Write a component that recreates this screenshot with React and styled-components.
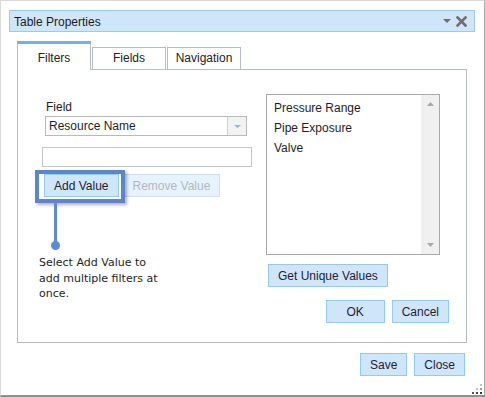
import React from "react";
import styled, { createGlobalStyle } from "styled-components";

const Global = createGlobalStyle`
  html, body { margin: 0; padding: 0; background: #fff; }
  * { box-sizing: border-box; }
`;

const Frame = styled.div`
  position: relative;
  width: 485px;
  height: 397px;
  padding: 9px 9px 0 8px;
  border-left: 1px solid #dadada;
  border-top: 1px solid #dadada;
  border-right: 1px solid #a9a9a9;
  border-bottom: 2px solid #8f8f8f;
  background: #fff;
  font-family: "Liberation Sans", Arial, sans-serif;
  font-size: 12px;
  color: #1e1e1e;
`;

const TitleBar = styled.div`
  height: 22px;
  border: 1px solid #9ccaee;
  background: #cfe6fa;
  display: flex;
  align-items: center;
  padding: 0 7px 0 4px;
`;

const TitleText = styled.div`
  flex: 1;
  line-height: 14px;
  padding-top: 1px;
  color: #1a1a1a;
`;

const TitleIcons = styled.div`
  display: flex;
  align-items: center;
  gap: 5px;
`;

const TabStrip = styled.div`
  display: flex;
  align-items: flex-end;
  gap: 1px;
  margin: 9px 0 -1px 8px;
  position: relative;
  z-index: 1;
`;

const Tab = styled.div`
  width: 74px;
  height: ${(p) => (p.$active ? "29px" : "23px")};
  display: flex;
  align-items: flex-end;
  justify-content: center;
  line-height: 14px;
  background: #fff;
  color: #222;
  border-left: 1px solid #b9bdc7;
  border-right: 1px solid #b9bdc7;
  border-top: ${(p) => (p.$active ? "3px solid #74b1e6" : "1px solid #b9bdc7")};
  border-bottom: ${(p) => (p.$active ? "none" : "1px solid #b9bdc7")};
  padding-bottom: ${(p) => (p.$active ? "5px" : "4px")};
`;

const Panel = styled.div`
  margin: 0 8px;
  height: 274px;
  border: 1px solid #b7bbc6;
  display: grid;
  grid-template-columns: 248px 1fr;
`;

const LeftCol = styled.div`
  padding: 30px 0 0 24px;
  display: flex;
  flex-direction: column;
  align-items: flex-start;
`;

const FieldLabel = styled.div`
  margin-left: 4px;
  line-height: 14px;
  color: #222;
`;

const Select = styled.div`
  margin: 2px 0 0 3px;
  width: 202px;
  height: 20px;
  border: 1px solid #b9b9b9;
  display: flex;
  align-items: stretch;
`;

const SelectValue = styled.div`
  flex: 1;
  padding-left: 3px;
  line-height: 18px;
  color: #1e1e1e;
`;

const SelectArrow = styled.div`
  width: 19px;
  border-left: 1px solid #cfcfcf;
  background: #f2f2f2;
  display: flex;
  align-items: center;
  justify-content: center;
`;

const TextInput = styled.div`
  margin-top: 11px;
  width: 210px;
  height: 20px;
  border: 1px solid #c6c6c6;
  background: #fff;
`;

const ButtonRow = styled.div`
  position: relative;
  margin: 7px 0 0 2px;
  display: flex;
  gap: 4px;
`;

const Button = styled.div`
  height: 23px;
  min-width: ${(p) => p.$minWidth || 0}px;
  padding: 0 9px;
  border: 1px solid ${(p) => (p.$disabled ? "#cbe3f8" : "#94c9f1")};
  background: ${(p) => (p.$disabled ? "#e6f2fd" : "#cfe6fa")};
  color: ${(p) => (p.$disabled ? "#b3b8c0" : "#1f2230")};
  display: flex;
  align-items: center;
  justify-content: center;
  line-height: 14px;
  white-space: nowrap;
`;

const Highlight = styled.div`
  position: absolute;
  left: -9px;
  top: -4px;
  width: 90px;
  height: 33px;
  border: 4px solid #5b86cb;
  box-shadow: 2px 2px 3px rgba(0, 0, 0, 0.3);
  pointer-events: none;
`;

const Connector = styled.div`
  position: absolute;
  left: 10px;
  top: 29px;
  width: 3px;
  height: 40px;
  background: #5b8bd3;
`;

const Dot = styled.div`
  position: absolute;
  left: 7px;
  top: 67px;
  width: 9px;
  height: 9px;
  border-radius: 50%;
  background: #5b8bd3;
`;

const HelpText = styled.div`
  margin: 58px 0 0 -3px;
  width: 130px;
  font-family: "DejaVu Sans", Verdana, sans-serif;
  font-size: 11px;
  line-height: 15.5px;
  color: #1e1e1e;
`;

const RightCol = styled.div`
  padding-top: 24px;
  display: flex;
  flex-direction: column;
  align-items: flex-start;
`;

const ListBox = styled.div`
  width: 174px;
  height: 161px;
  border: 1px solid #a9a9a9;
  display: flex;
`;

const ListItems = styled.div`
  flex: 1;
  padding: 3px 0 0 7px;
`;

const ListItem = styled.div`
  line-height: 20px;
  color: #1e1e1e;
`;

const ScrollBar = styled.div`
  width: 18px;
  background: #f0f0f0;
  display: flex;
  flex-direction: column;
  justify-content: space-between;
  align-items: center;
  padding: 7px 0 7px;
`;

const UniqueRow = styled.div`
  margin: 9px 0 0 2px;
`;

const OkRow = styled.div`
  align-self: stretch;
  margin-top: 13px;
  display: flex;
  justify-content: flex-end;
  gap: 7px;
  padding-right: 17px;
`;

const Footer = styled.div`
  margin-top: 10px;
  display: flex;
  justify-content: flex-end;
  gap: 7px;
  padding-right: 10px;
`;

const Grip = styled.svg`
  position: absolute;
  right: 1px;
  bottom: 0px;
`;

const Tri = ({ w, h, color, down = true }) => (
  <svg width={w} height={h} viewBox={`0 0 ${w} ${h}`}>
    <polygon
      points={down ? `0,0 ${w},0 ${w / 2},${h}` : `0,${h} ${w},${h} ${w / 2},0`}
      fill={color}
    />
  </svg>
);

export default function App() {
  return (
    <>
      <Global />
      <Frame>
        <TitleBar>
          <TitleText>Table Properties</TitleText>
          <TitleIcons>
            <Tri w={8} h={4} color="#6f6f6f" />
            <svg width="11" height="11" viewBox="0 0 11 11">
              <path d="M1.5 1.5 L9.5 9.5 M9.5 1.5 L1.5 9.5" stroke="#6f6f6f" strokeWidth="2.6" strokeLinecap="square" />
            </svg>
          </TitleIcons>
        </TitleBar>

        <TabStrip>
          <Tab $active>Filters</Tab>
          <Tab>Fields</Tab>
          <Tab>Navigation</Tab>
        </TabStrip>

        <Panel>
          <LeftCol>
            <FieldLabel>Field</FieldLabel>
            <Select>
              <SelectValue>Resource Name</SelectValue>
              <SelectArrow>
                <Tri w={7} h={3} color="#9ab3d8" />
              </SelectArrow>
            </Select>
            <TextInput />
            <ButtonRow>
              <Button>Add Value</Button>
              <Button $disabled>Remove Value</Button>
              <Highlight />
              <Connector />
              <Dot />
            </ButtonRow>
            <HelpText>Select Add Value to add multiple filters at once.</HelpText>
          </LeftCol>

          <RightCol>
            <ListBox>
              <ListItems>
                <ListItem>Pressure Range</ListItem>
                <ListItem>Pipe Exposure</ListItem>
                <ListItem>Valve</ListItem>
              </ListItems>
              <ScrollBar>
                <Tri w={7} h={4} color="#a9a9a9" down={false} />
                <Tri w={7} h={4} color="#a9a9a9" />
              </ScrollBar>
            </ListBox>
            <UniqueRow>
              <Button>Get Unique Values</Button>
            </UniqueRow>
            <OkRow>
              <Button $minWidth={59}>OK</Button>
              <Button>Cancel</Button>
            </OkRow>
          </RightCol>
        </Panel>

        <Footer>
          <Button>Save</Button>
          <Button>Close</Button>
        </Footer>

        <Grip width="11" height="11" viewBox="0 0 11 11">
          <rect x="8" y="0" width="2" height="2" fill="#c4c4c4" />
          <rect x="4" y="4" width="2" height="2" fill="#c4c4c4" />
          <rect x="8" y="4" width="2" height="2" fill="#9a9a9a" />
          <rect x="0" y="8" width="2" height="2" fill="#555" />
          <rect x="4" y="8" width="2" height="2" fill="#444" />
          <rect x="8" y="8" width="2" height="2" fill="#333" />
        </Grip>
      </Frame>
    </>
  );
}
